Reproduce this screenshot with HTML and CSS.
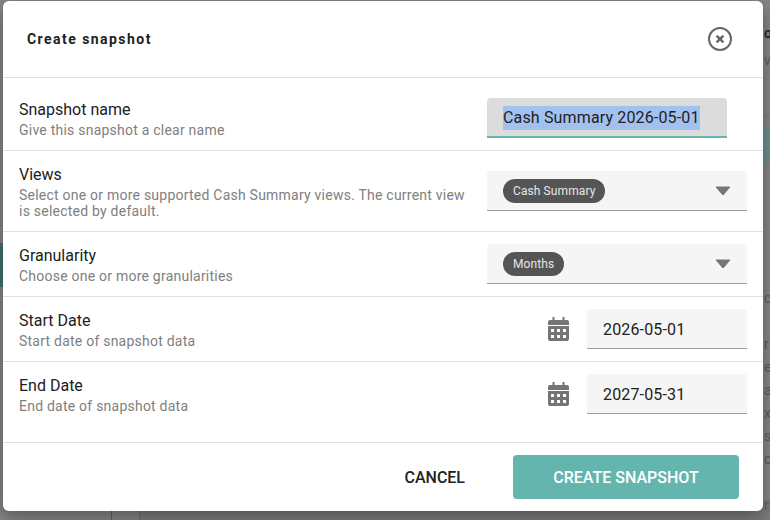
FILE: index.html
```html
<!DOCTYPE html>
<html lang="en">
<head>
  <meta charset="UTF-8">
  <title>Create snapshot</title>
  <link rel="stylesheet" href="styles.css">
</head>
<body>
  <!-- dimmed page behind the dialog -->
  <div class="backdrop">
    <div class="bg-teal-left"></div>
    <div class="bg-teal-right"></div>
    <div class="bg-band"></div>
    <div class="bg-line-a"></div>
    <div class="bg-line-b"></div>
    <div class="bg-panel"></div>
    <span class="bg-text bg-t1">o</span>
    <span class="bg-text bg-t2">v</span>
    <span class="bg-text bg-t3">c</span>
    <span class="bg-text bg-t4">r</span>
    <span class="bg-text bg-t5">es</span>
    <span class="bg-text bg-t6">a</span>
    <span class="bg-text bg-t7">xp</span>
    <span class="bg-text bg-t8">s</span>
    <span class="bg-text bg-t9">on</span>
    <span class="bg-text bg-t10">ri</span>
  </div>

  <div class="dialog">
    <div class="dialog-header">
      <h1>Create snapshot</h1>
      <svg class="close-icon" width="26" height="26" viewBox="0 0 26 26">
        <circle cx="13" cy="13" r="11" fill="none" stroke="#666" stroke-width="2"/>
        <path d="M9.6 9.6l6.8 6.8M16.4 9.6l-6.8 6.8" fill="none" stroke="#666" stroke-width="2.4"/>
      </svg>
    </div>

    <div class="row row-name">
      <div class="row-text">
        <div class="label">Snapshot name</div>
        <div class="hint">Give this snapshot a clear name</div>
      </div>
      <div class="field field-active"><span class="selected">Cash Summary 2026-05-01</span></div>
    </div>

    <div class="row row-views">
      <div class="row-text">
        <div class="label">Views</div>
        <div class="hint">Select one or more supported Cash Summary views. The current view is selected by default.</div>
      </div>
      <div class="field field-select">
        <span class="chip">Cash Summary</span>
        <svg class="caret" width="16" height="10" viewBox="0 0 16 10"><path d="M1 1h14l-7 8z" fill="#757575" stroke="#757575" stroke-linejoin="round"/></svg>
      </div>
    </div>

    <div class="row">
      <div class="row-text">
        <div class="label">Granularity</div>
        <div class="hint">Choose one or more granularities</div>
      </div>
      <div class="field field-select">
        <span class="chip">Months</span>
        <svg class="caret" width="16" height="10" viewBox="0 0 16 10"><path d="M1 1h14l-7 8z" fill="#757575" stroke="#757575" stroke-linejoin="round"/></svg>
      </div>
    </div>

    <div class="row">
      <div class="row-text">
        <div class="label">Start Date</div>
        <div class="hint">Start date of snapshot data</div>
      </div>
      <svg class="calendar" width="21" height="24" viewBox="0 0 21 24">
        <path fill-rule="evenodd" fill="#757575" d="M4.500 0h2v3h8V0h2v3h2.500a2 2 0 0 1 2 2v3H0V5a2 2 0 0 1 2-2h2.500zM0 9h21v13a2 2 0 0 1-2 2H2a2 2 0 0 1-2-2zM3 12v3h3v-3zM9 12v3h3v-3zM15 12v3h3v-3zM3 18v3h3v-3zM9 18v3h3v-3zM15 18v3h3v-3z"/>
      </svg>
      <div class="field field-date">2026-05-01</div>
    </div>

    <div class="row row-end">
      <div class="row-text">
        <div class="label">End Date</div>
        <div class="hint">End date of snapshot data</div>
      </div>
      <svg class="calendar" width="21" height="24" viewBox="0 0 21 24">
        <path fill-rule="evenodd" fill="#757575" d="M4.500 0h2v3h8V0h2v3h2.500a2 2 0 0 1 2 2v3H0V5a2 2 0 0 1 2-2h2.500zM0 9h21v13a2 2 0 0 1-2 2H2a2 2 0 0 1-2-2zM3 12v3h3v-3zM9 12v3h3v-3zM15 12v3h3v-3zM3 18v3h3v-3zM9 18v3h3v-3zM15 18v3h3v-3z"/>
      </svg>
      <div class="field field-date">2027-05-31</div>
    </div>

    <div class="dialog-footer">
      <button class="btn-cancel">CANCEL</button>
      <button class="btn-create">CREATE SNAPSHOT</button>
    </div>
  </div>
</body>
</html>
```

FILE: styles.css
```css
html, body {
  margin: 0;
  padding: 0;
  height: 100%;
  overflow: hidden;
}

body {
  font-family: "Roboto", "Liberation Sans", sans-serif;
  background-color: #858585;
  color: #212121;
}

/* page behind the overlay */
.backdrop {
  position: absolute;
  inset: 0;
  overflow: hidden;
}

.bg-teal-left {
  position: absolute;
  left: 0;
  top: 243px;
  width: 3px;
  height: 44px;
  background-color: #3f716d;
}

.bg-teal-right {
  position: absolute;
  right: 0;
  top: 128px;
  width: 7px;
  height: 36px;
  background-color: #6a8f8c;
}

.bg-band {
  position: absolute;
  right: 0;
  top: 115px;
  width: 7px;
  height: 1px;
  background-color: #7a7a7a;
}

.bg-line-a {
  position: absolute;
  left: 111px;
  top: 505px;
  width: 1px;
  height: 15px;
  background-color: #5f5f5f;
}

.bg-line-b {
  position: absolute;
  left: 139px;
  top: 505px;
  width: 1px;
  height: 15px;
  background-color: #6f6f6f;
}

.bg-panel {
  position: absolute;
  left: 140px;
  right: 0;
  bottom: 0;
  height: 20px;
  background-color: #7c7c7c;
}

.bg-text {
  position: absolute;
  left: 764px;
  font-size: 14px;
  line-height: 16px;
  color: #5c5c5c;
}

.bg-t1 { top: 25px; color: #222; font-weight: 500; }
.bg-t2 { top: 52px; }
.bg-t3 { top: 290px; }
.bg-t4 { top: 336px; }
.bg-t5 { top: 359px; }
.bg-t6 { top: 382px; }
.bg-t7 { top: 405px; }
.bg-t8 { top: 428px; }
.bg-t9 { top: 451px; }
.bg-t10 { top: 497px; }

/* dialog */
.dialog {
  position: absolute;
  left: 3px;
  top: 1px;
  width: 760px;
  height: 510px;
  display: flex;
  flex-direction: column;
  background-color: #fff;
  border-radius: 6px;
  box-shadow: 0 6px 18px rgba(0, 0, 0, 0.35);
  overflow: hidden;
}

.dialog-header {
  display: flex;
  align-items: center;
  justify-content: space-between;
  height: 76px;
  padding: 0 30px 0 24px;
  border-bottom: 1px solid #e0e0e0;
}

.dialog-header h1 {
  margin: 0;
  font-size: 14px;
  font-weight: 700;
  letter-spacing: 1.45px;
  color: #212121;
}

.row {
  display: flex;
  align-items: flex-start;
  padding: 12px 16px;
  border-bottom: 1px solid #e0e0e0;
}

.row-name {
  padding-top: 20px;
}

.row-views .field {
  margin-top: 8px;
  margin-bottom: 8px;
}

.row-end {
  padding-bottom: 28px;
}

.row-text {
  flex: 1;
  min-width: 0;
}

.label {
  font-size: 16px;
  line-height: 24px;
  color: #212121;
}

.hint {
  max-width: 452px;
  font-size: 14px;
  line-height: 16px;
  letter-spacing: 0.23px;
  color: #808080;
}

.field {
  display: flex;
  align-items: center;
  box-sizing: border-box;
  height: 40px;
  padding: 1px 16px 0;
  background-color: #f5f5f5;
  border-bottom: 1px solid #9e9e9e;
  border-radius: 4px 4px 0 0;
  font-size: 16px;
  letter-spacing: 0.15px;
}

.field-active {
  width: 240px;
  margin-right: 20px;
  padding-top: 2px;
  background-color: #dcdcdc;
  border-bottom: 2px solid #64b5af;
}

.selected {
  background-color: #a3c1ee;
  line-height: 24px;
}

.field-select {
  width: 260px;
  justify-content: space-between;
  padding-right: 16px;
}

.chip {
  height: 24px;
  padding: 0 10px;
  background-color: #555;
  border-radius: 12px;
  font-size: 12px;
  line-height: 24px;
  letter-spacing: 0.1px;
  color: #e6e6e6;
}

.caret {
  display: block;
}

.calendar {
  display: block;
  flex: none;
  margin: 8px 18px 0 0;
}

.field-date {
  width: 160px;
}

.dialog-footer {
  display: flex;
  align-items: center;
  justify-content: flex-end;
  flex: 1;
  padding: 0 24px 0 0;
}

button {
  font-family: inherit;
  font-size: 16px;
  font-weight: 500;
  border: none;
  border-radius: 4px;
  cursor: pointer;
}

.btn-cancel {
  padding: 0;
  margin-right: 48px;
  background: none;
  color: #212121;
}

.btn-create {
  width: 226px;
  height: 44px;
  background-color: #65b5af;
  color: #fff;
}
```
